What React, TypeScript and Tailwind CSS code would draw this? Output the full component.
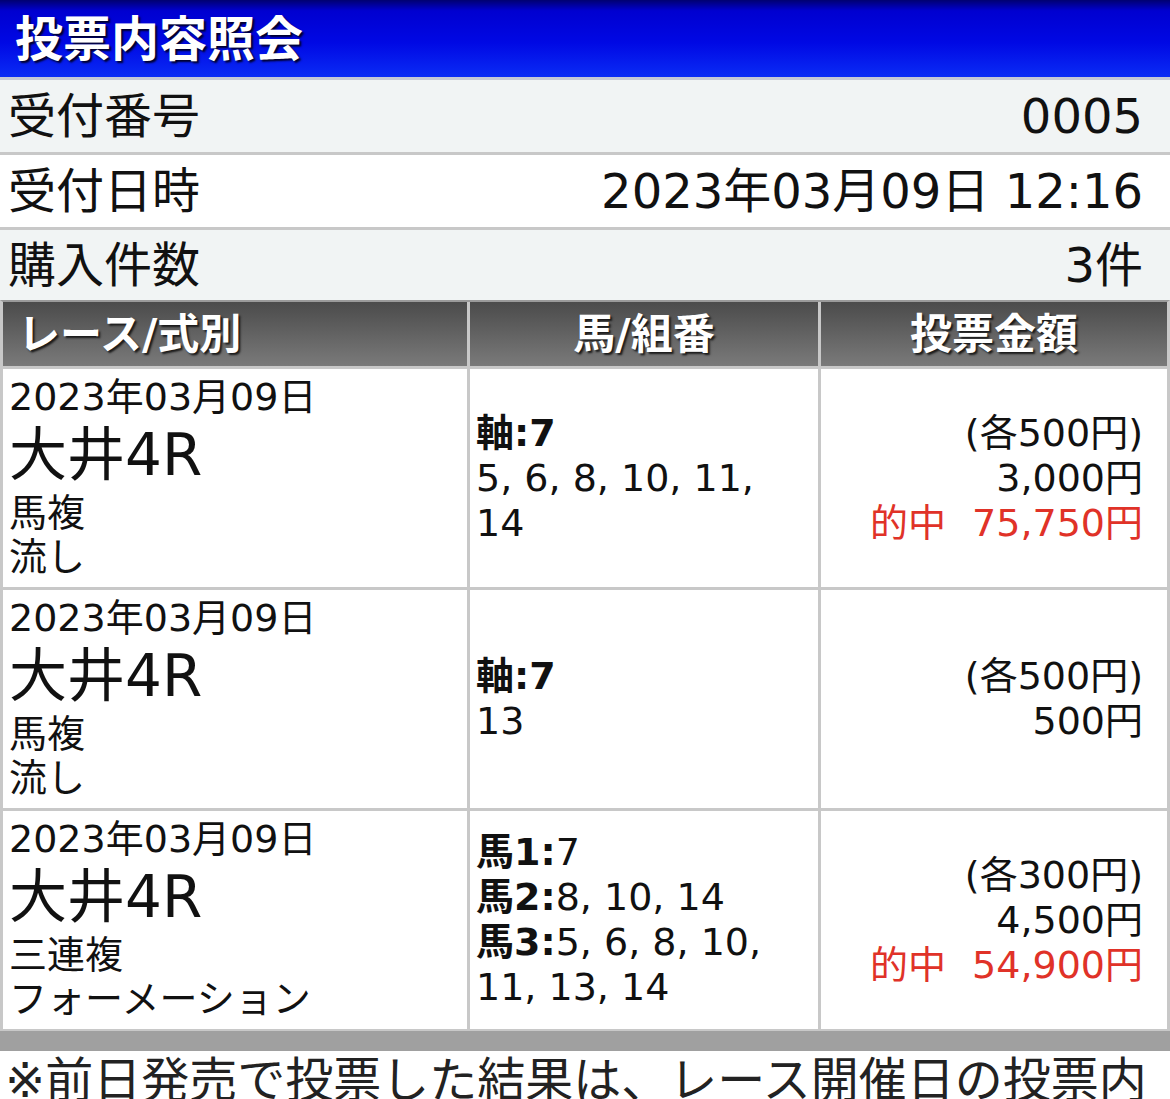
import React from "react";

type ComboLine = { label?: string; value?: string };

interface Bet {
  date: string;
  race: string;
  kind: string;
  method: string;
  combos: ComboLine[];
  each: string;
  total: string;
  hit?: string;
}

const BETS: Bet[] = [
  {
    date: "2023年03月09日",
    race: "大井4R",
    kind: "馬複",
    method: "流し",
    combos: [{ label: "軸:7" }, { value: "5, 6, 8, 10, 11," }, { value: "14" }],
    each: "(各500円)",
    total: "3,000円",
    hit: "75,750円",
  },
  {
    date: "2023年03月09日",
    race: "大井4R",
    kind: "馬複",
    method: "流し",
    combos: [{ label: "軸:7" }, { value: "13" }],
    each: "(各500円)",
    total: "500円",
  },
  {
    date: "2023年03月09日",
    race: "大井4R",
    kind: "三連複",
    method: "フォーメーション",
    combos: [
      { label: "馬1:", value: "7" },
      { label: "馬2:", value: "8, 10, 14" },
      { label: "馬3:", value: "5, 6, 8, 10," },
      { value: "11, 13, 14" },
    ],
    each: "(各300円)",
    total: "4,500円",
    hit: "54,900円",
  },
];

const INFO = [
  { label: "受付番号", value: "0005", bg: "bg-[#f1f4f4]", h: "h-[72px]" },
  { label: "受付日時", value: "2023年03月09日 12:16", bg: "bg-white", h: "h-[72px]" },
  { label: "購入件数", value: "3件", bg: "bg-[#f1f4f4]", h: "h-[70px]" },
];

function InfoRow({ label, value, bg, h }: { label: string; value: string; bg: string; h: string }) {
  return (
    <div className={`flex items-center justify-between pl-[8px] pr-[27px] text-[48px] text-[#111] ${h} ${bg}`}>
      <span>{label}</span>
      <span>{value}</span>
    </div>
  );
}

function BetRow({ bet }: { bet: Bet }) {
  return (
    <>
      <div className="bg-white pl-[6px] pt-[6px] pb-[8px] text-[#111]">
        <div className="text-[38px] leading-[44px] whitespace-nowrap">{bet.date}</div>
        <div className="text-[58px] leading-[72px] whitespace-nowrap">{bet.race}</div>
        <div className="text-[38px] leading-[44px]">{bet.kind}</div>
        <div className="text-[38px] leading-[44px] whitespace-nowrap">{bet.method}</div>
      </div>
      <div className="flex flex-col justify-center bg-white pl-[6px] text-[38px] leading-[45px] text-[#111]">
        {bet.combos.map((line, i) => (
          <div key={i} className="whitespace-nowrap">
            {line.label && <span className="font-bold">{line.label}</span>}
            {line.value}
          </div>
        ))}
      </div>
      <div className="flex flex-col items-end justify-center bg-white pr-[24px] text-[38px] leading-[45px] text-[#111]">
        <div className="whitespace-nowrap">{bet.each}</div>
        <div className="whitespace-nowrap">{bet.total}</div>
        {bet.hit && (
          <div className="whitespace-nowrap text-[#e03228]">
            的中<span className="ml-[26px]">{bet.hit}</span>
          </div>
        )}
      </div>
    </>
  );
}

export default function App() {
  return (
    <div className="h-[1099px] w-[1170px] overflow-hidden bg-white font-['DejaVu_Sans','Noto_Sans_CJK_JP',sans-serif]">
      <div className="flex h-[80px] items-center border-b-[3px] border-[#c5c9d6] bg-[linear-gradient(to_bottom,#000070_0%,#0000d0_14%,#0008e4_55%,#0a2cf5_100%)] pl-[15px]">
        <h1 className="text-[48px] font-bold leading-none text-white [text-shadow:2px_2px_2px_#00002a]">
          投票内容照会
        </h1>
      </div>

      {INFO.map((row, i) => (
        <div key={row.label} className={i < INFO.length - 1 ? "border-b-[3px] border-[#c8c8c8]" : ""}>
          <InfoRow {...row} />
        </div>
      ))}

      <div className="grid grid-cols-[464px_348px_1fr] gap-[3px] border-x-[3px] border-t-[2px] border-b-[2px] border-x-[#c8c8c8] border-t-[#9a9a9a] border-b-[#c8c8c8] bg-[#c8c8c8]">
        <div className="flex h-[64px] items-center bg-[linear-gradient(to_bottom,#4b4b4b,#7a7a7a)] pl-[15px] text-[42px] font-bold text-white [text-shadow:2px_2px_2px_#1a1a1a]">
          レース/式別
        </div>
        <div className="flex h-[64px] items-center justify-center bg-[linear-gradient(to_bottom,#4b4b4b,#7a7a7a)] text-[42px] font-bold text-white [text-shadow:2px_2px_2px_#1a1a1a]">
          馬/組番
        </div>
        <div className="flex h-[64px] items-center justify-center bg-[linear-gradient(to_bottom,#4b4b4b,#7a7a7a)] text-[42px] font-bold text-white [text-shadow:2px_2px_2px_#1a1a1a]">
          投票金額
        </div>
        {BETS.map((bet, i) => (
          <BetRow key={i} bet={bet} />
        ))}
      </div>

      <div className="h-[20px] bg-[#a0a0a0]" />

      <p className="pl-[5px] pr-[3px] text-[48px] leading-[58px] text-[#222]">
        ※前日発売で投票した結果は、レース開催日の投票内容照会には表示されません。
      </p>
    </div>
  );
}
